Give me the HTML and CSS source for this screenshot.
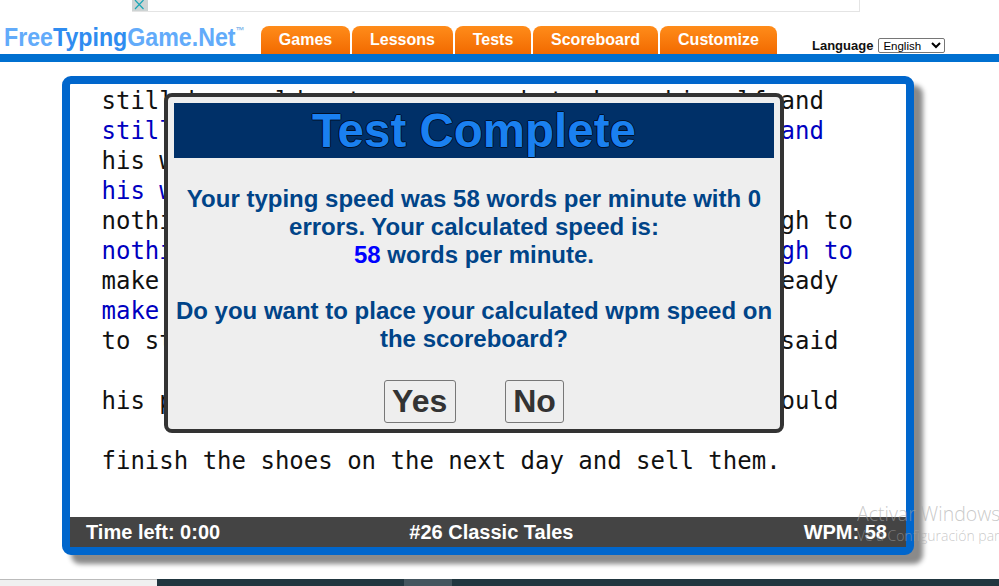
FILE: index.html
```html
<!DOCTYPE html>
<html lang="en">
<head>
<meta charset="utf-8">
<title>FreeTypingGame.Net</title>
<link rel="stylesheet" href="styles.css">
</head>
<body>
<div class="ad">
  <span class="ad-close"><svg width="15" height="11" viewBox="0 0 15 11"><path d="M3 0 L11.5 9 M11.5 0 L3 9" stroke="#1aa6b5" stroke-width="1.2" fill="none"/></svg></span>
</div>
<header class="header">
  <div class="logo"><span class="logo-text"><span class="logo-light">Free</span><span class="logo-dark">Typing</span><span class="logo-light">Game.Net</span><span class="tm">™</span></span></div>
  <nav class="tabs">
    <a class="tab tab-games">Games</a>
    <a class="tab tab-lessons">Lessons</a>
    <a class="tab tab-tests">Tests</a>
    <a class="tab tab-score">Scoreboard</a>
    <a class="tab tab-custom">Customize</a>
  </nav>
  <div class="lang">
    <span class="lang-label">Language</span>
    <select class="lang-select"><option>English</option></select>
  </div>
</header>
<main class="card">
  <div class="text">
    <div>still he could not earn enough to keep himself and</div>
    <div class="typed">still he could not earn enough to keep himself and</div>
    <div>his wife in bread. At last he had</div>
    <div class="typed">his wife in bread. At last he had</div>
    <div>nothing left in the world but leather just enough to</div>
    <div class="typed">nothing left in the world but leather just enough to</div>
    <div>make one pair of shoes. Then cut them out all ready</div>
    <div class="typed">make one pair of shoes. Then cut them out</div>
    <div>to start work on the next morning, and then he said</div>
    <div>&nbsp;</div>
    <div>his prayers and went to sleep, hoping that he could</div>
    <div>&nbsp;</div>
    <div>finish the shoes on the next day and sell them.</div>
  </div>
  <div class="status">
    <span>Time left: 0:00</span>
    <span class="status-title">#26 Classic Tales</span>
    <span>WPM: 58</span>
  </div>
  <section class="modal">
    <h1 class="modal-title">Test Complete</h1>
    <div class="modal-body">
      <p>Your typing speed was 58 words per minute with 0 errors. Your calculated speed is:<br><span class="speed">58</span> words per minute.</p>
      <p class="question">Do you want to place your calculated wpm speed on the scoreboard?</p>
    </div>
    <div class="actions">
      <button class="btn">Yes</button>
      <button class="btn">No</button>
    </div>
  </section>
</main>
<footer class="taskbar">
  <div class="task-left"></div>
  <div class="task-right"><span class="task-item"></span></div>
</footer>
<div class="watermark">
  <div class="wm-title">Activar Windows</div>
  <div class="wm-sub">Ve a Configuración para activar Windows.</div>
</div>
</body>
</html>
```
FILE: styles.css
```css
html, body { margin: 0; padding: 0; height: 586px; overflow: hidden; background: #fff; }
body { position: relative; font-family: "Liberation Sans", Arial, sans-serif; }

.ad { box-sizing: border-box; width: 728px; height: 12px; margin-left: 132px; border-right: 1px solid #e4e4e4; border-bottom: 1px solid #e4e4e4; }
.ad-close { display: block; width: 16px; height: 11px; background: #cdd3d3; }
.ad-close svg { display: block; }

.header { display: flex; align-items: flex-end; height: 42px; border-bottom: 8px solid #0070d0; }
.logo { box-sizing: border-box; width: 261px; height: 32px; padding-left: 4px; white-space: nowrap; }
.logo-text { display: inline-block; font-size: 26.5px; font-weight: bold; line-height: 30px; transform: scaleX(0.875); transform-origin: left center; }
.logo-light { color: #62abfa; }
.logo-dark { color: #2f8cf0; }
.tm { font-size: 10px; line-height: 10px; vertical-align: 12px; color: #82b6ea; }

.tabs { display: flex; gap: 2px; }
.tab { display: block; box-sizing: border-box; height: 28px; text-align: center; color: #fff; font-size: 16px; font-weight: bold; line-height: 28px; border-radius: 8px 8px 0 0; background: linear-gradient(#ff8c1a, #f26a00); }
.tab-games { width: 89px; }
.tab-lessons { width: 101px; }
.tab-tests { width: 76px; }
.tab-score { width: 125px; }
.tab-custom { width: 117px; }

.lang { display: flex; align-items: center; margin-left: 35px; height: 16px; margin-bottom: 1px; font-size: 13px; font-weight: bold; color: #111; }
.lang-select { box-sizing: border-box; width: 67px; height: 15px; margin: 0 0 0 5px; padding: 0; font: 11.5px/13px "Liberation Sans", Arial, sans-serif; color: #000; background: #fff; border: 1px solid #767676; border-radius: 2px; }

.card { position: relative; box-sizing: border-box; width: 852px; height: 479px; margin: 14px 0 0 62px; border: 8px solid #0066cc; border-radius: 9px; box-shadow: 9px 9px 5px #8a8a8a; background: #fff; display: flex; flex-direction: column; justify-content: space-between; }
.text { padding: 2px 0 0 31.5px; font-family: "DejaVu Sans Mono", monospace; font-size: 24px; line-height: 30px; color: #111; white-space: nowrap; }
.typed { color: #0000c0; }
.status { display: flex; justify-content: space-between; height: 30px; padding: 0 19px 0 16px; background: #444; color: #fff; font-size: 20px; font-weight: bold; line-height: 30px; }
.status-title { padding-right: 41px; }

.modal { position: absolute; left: 94px; top: 9px; box-sizing: border-box; width: 620px; height: 340px; padding: 6px; border: 4px solid #333; border-radius: 8px; background: #eee; text-align: center; }
.modal-title { margin: 0; height: 55px; background: #003068; color: #1a80f0; font-size: 47.5px; font-weight: bold; line-height: 55px; text-shadow: 1px 0 #001028, -1px 0 #001028, 0 1px #001028, 0 -1px #001028; }
.modal-body { padding-top: 27px; color: #004488; font-size: 24px; font-weight: bold; line-height: 28px; }
.modal-body p { margin: 0; }
.modal-body .question { margin-top: 28px; }
.speed { color: #0000ff; }
.actions { display: flex; justify-content: center; gap: 49px; margin-top: 27px; }
.btn { box-sizing: border-box; height: 43px; padding: 0 7.5px; font: bold 32px "Liberation Sans", Arial, sans-serif; color: #333; background: #eee; border: 1px solid #777; border-radius: 3px; }

.taskbar { position: absolute; left: 0; right: 0; bottom: 0; height: 7px; display: flex; }
.task-left { box-sizing: border-box; width: 157px; background: #f0f0f0; border-top: 1px solid #bbb; }
.task-right { flex: 1; background: #21363f; padding-left: 247px; }
.task-item { display: block; width: 48px; height: 7px; background: #44555e; }

.watermark { position: absolute; left: 857px; top: 500px; width: 142px; overflow: hidden; white-space: nowrap; color: rgba(165,165,165,0.6); font-family: "Open Sans", sans-serif; pointer-events: none; }
.wm-title { font-size: 19.5px; font-weight: 300; line-height: 27px; }
.wm-sub { font-size: 14px; font-weight: 300; line-height: 18px; margin-top: 0; }
```
